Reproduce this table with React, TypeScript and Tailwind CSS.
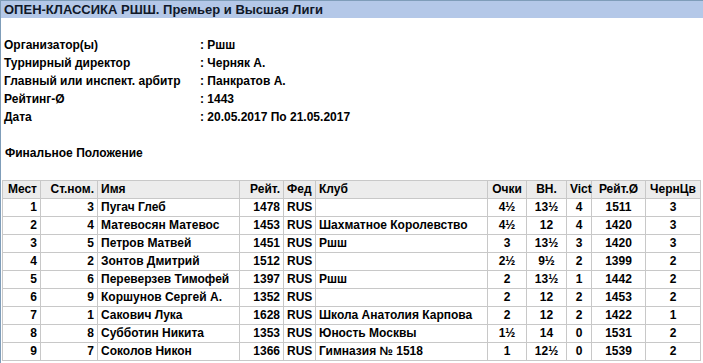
import React from "react";

const info: [string, string][] = [
  ["Организатор(ы)", ": Ршш"],
  ["Турнирный директор", ": Черняк А."],
  ["Главный или инспект. арбитр", ": Панкратов А."],
  ["Рейтинг-Ø", ": 1443"],
  ["Дата", ": 20.05.2017 По 21.05.2017"],
];

const rows: string[][] = [
  ["1", "3", "Пугач Глеб", "1478", "RUS", "", "4½", "13½", "4", "1511", "3"],
  ["2", "4", "Матевосян Матевос", "1453", "RUS", "Шахматное Королевство", "4½", "12", "4", "1420", "3"],
  ["3", "5", "Петров Матвей", "1451", "RUS", "Ршш", "3", "13½", "3", "1420", "3"],
  ["4", "2", "Зонтов Дмитрий", "1512", "RUS", "", "2½", "9½", "2", "1399", "2"],
  ["5", "6", "Переверзев Тимофей", "1397", "RUS", "Ршш", "2", "13½", "1", "1442", "2"],
  ["6", "9", "Коршунов Сергей А.", "1352", "RUS", "", "2", "12", "2", "1453", "2"],
  ["7", "1", "Сакович Лука", "1628", "RUS", "Школа Анатолия Карпова", "2", "12", "2", "1422", "1"],
  ["8", "8", "Субботин Никита", "1353", "RUS", "Юность Москвы", "1½", "14", "0", "1531", "2"],
  ["9", "7", "Соколов Никон", "1366", "RUS", "Гимназия № 1518", "1", "12½", "0", "1539", "2"],
];

const headers = ["Мест", "Ст.ном.", "Имя", "Рейт.", "Фед", "Клуб", "Очки", "ВН.", "Vict", "Рейт.Ø", "ЧернЦв"];
const widths = ["w-[38px]", "w-[57px]", "w-[142px]", "w-[44px]", "w-[32px]", "w-[172px]", "w-[39px]", "w-[40px]", "w-[25px]", "w-[54px]", "w-[55px]"];
const align = ["text-right", "text-right", "text-left", "text-right", "text-left", "text-left", "text-center", "text-center", "text-center", "text-center", "text-center"];

export default function App() {
  return (
    <div className="min-h-screen border-l border-[#7f9db9] bg-white text-black font-['Liberation_Sans',Arial,sans-serif] text-[12px] font-bold leading-[18px]">
      <div className="h-[18px] border-t border-[#7f9db9] bg-[#b4c8e8] pl-[3px] text-[13px] leading-[17px] font-bold text-[#101828]">
        ОПЕН-КЛАССИКА РШШ. Премьер и Высшая Лиги
      </div>
      <div className="pt-[18px] pl-[3px]">
        {info.map(([k, v]) => (
          <div key={k} className="flex h-[18px] items-center">
            <div className="w-[196px]">{k}</div>
            <div>{v}</div>
          </div>
        ))}
      </div>
      <div className="mt-[18px] h-[19px] pl-[4px] leading-[19px]">Финальное Положение</div>
      <div className="mt-[17px] pl-px">
        <table className="w-[698px] table-fixed border-collapse">
          <thead>
            <tr className="h-[18px] bg-[#ececec]">
              {headers.map((h, i) => (
                <th key={h} className={`${widths[i]} ${align[i]} border border-[#c8c8c8] px-[3px] py-0 font-bold leading-[17px]`}>
                  {h}
                </th>
              ))}
            </tr>
          </thead>
          <tbody>
            {rows.map((r) => (
              <tr key={r[0]} className="h-[18px]">
                {r.map((c, i) => (
                  <td key={i} className={`${align[i]} border border-[#c8c8c8] px-[3px] py-0 whitespace-nowrap overflow-hidden leading-[17px]`}>
                    {c}
                  </td>
                ))}
              </tr>
            ))}
          </tbody>
        </table>
      </div>
    </div>
  );
}
